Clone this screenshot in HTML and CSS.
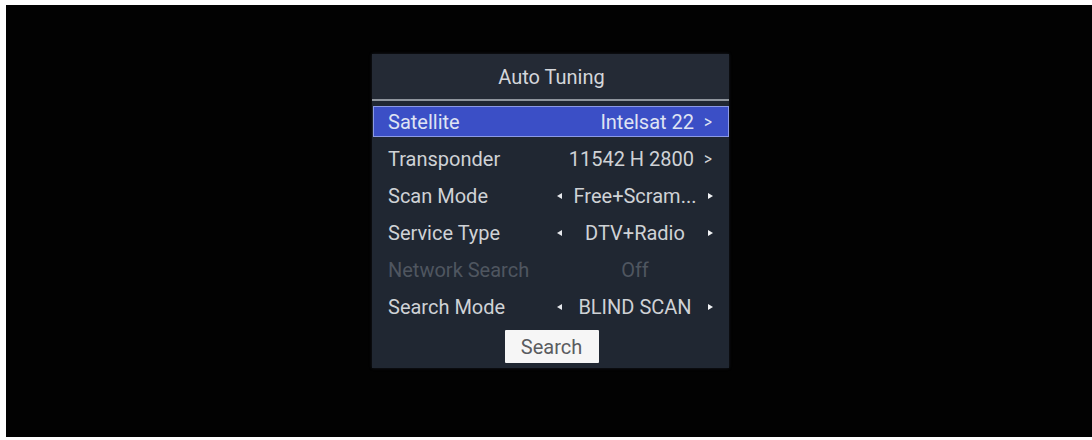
FILE: index.html
```html
<!DOCTYPE html>
<html>
<head>
<meta charset="utf-8">
<link rel="stylesheet" href="styles.css">
</head>
<body>
<div class="screen">
  <div class="dialog">
    <div class="title">Auto Tuning</div>
    <div class="sep"></div>
    <div class="rows">
      <div class="row active">
        <span class="label">Satellite</span>
        <span class="value link"><span class="vtext">Intelsat 22</span><span class="chev">&gt;</span></span>
      </div>
      <div class="row">
        <span class="label">Transponder</span>
        <span class="value link"><span class="vtext">11542 H 2800</span><span class="chev">&gt;</span></span>
      </div>
      <div class="row">
        <span class="label">Scan Mode</span>
        <span class="value select"><i class="tri left"></i><span class="vtext">Free+Scram...</span><i class="tri right"></i></span>
      </div>
      <div class="row">
        <span class="label">Service Type</span>
        <span class="value select"><i class="tri left"></i><span class="vtext">DTV+Radio</span><i class="tri right"></i></span>
      </div>
      <div class="row disabled">
        <span class="label">Network Search</span>
        <span class="value select"><i class="tri blank"></i><span class="vtext">Off</span><i class="tri blank"></i></span>
      </div>
      <div class="row">
        <span class="label">Search Mode</span>
        <span class="value select"><i class="tri left"></i><span class="vtext">BLIND SCAN</span><i class="tri right"></i></span>
      </div>
    </div>
    <div class="actions">
      <button class="btn">Search</button>
    </div>
  </div>
</div>
</body>
</html>
```

FILE: styles.css
```css
html, body {
  margin: 0;
  padding: 0;
  background: #ffffff;
}
body {
  width: 1092px;
  height: 440px;
  overflow: hidden;
  font-family: Roboto, "Liberation Sans", sans-serif;
}
.screen {
  margin: 5px 0 0 6px;
  height: 432px;
  background: #020202;
  box-sizing: border-box;
  padding: 49px 0 0 366px;
}
.dialog {
  width: 357px;
  height: 314px;
  background: #202732;
  box-sizing: border-box;
  display: flex;
  flex-direction: column;
  color: #cfd2d6;
  box-shadow: 0 0 3px rgba(60, 70, 90, 0.4);
}
.title {
  height: 45px;
  display: flex;
  align-items: center;
  justify-content: center;
  font-size: 20px;
  color: #d4d6db;
  background: #242a35;
  padding-left: 2px;
}
.sep {
  height: 2px;
  background: #8e949c;
}
.rows {
  display: flex;
  flex-direction: column;
  gap: 6px;
  padding-top: 5px;
}
.row {
  height: 31px;
  margin-left: 1px;
  display: flex;
  align-items: center;
  justify-content: space-between;
  padding: 0 16px 0 15px;
  font-size: 20px;
  box-sizing: border-box;
}
.row.active {
  background: #3b4fc6;
  border: 1px solid #8c9ae6;
  color: #dfe3f3;
  padding-left: 14px;
  padding-right: 15px;
}
.row.disabled {
  color: #4f5660;
}
.value {
  display: flex;
  align-items: center;
}
.link .chev {
  margin-left: 9px;
  font-size: 19px;
  transform: scaleX(0.8);
}
.select {
  width: 156px;
  justify-content: space-between;
}
.select .vtext {
  flex: 1;
  text-align: center;
  white-space: nowrap;
}
.tri {
  display: block;
  flex: none;
  width: 0;
  height: 0;
  border-top: 3px solid transparent;
  border-bottom: 3px solid transparent;
}
.tri.left {
  border-right: 5px solid #e6e8ec;
}
.tri.right {
  border-left: 5px solid #f2f3f5;
}
.tri.blank {
  width: 5px;
}
.actions {
  display: flex;
  justify-content: center;
  padding-top: 8px;
}
.btn {
  width: 94px;
  height: 33px;
  background: #f6f6f6;
  border: none;
  border-radius: 1px;
  color: #5a5c60;
  font-family: Roboto, "Liberation Sans", sans-serif;
  font-size: 20px;
  padding: 0;
  margin-left: 2px;
}
```
